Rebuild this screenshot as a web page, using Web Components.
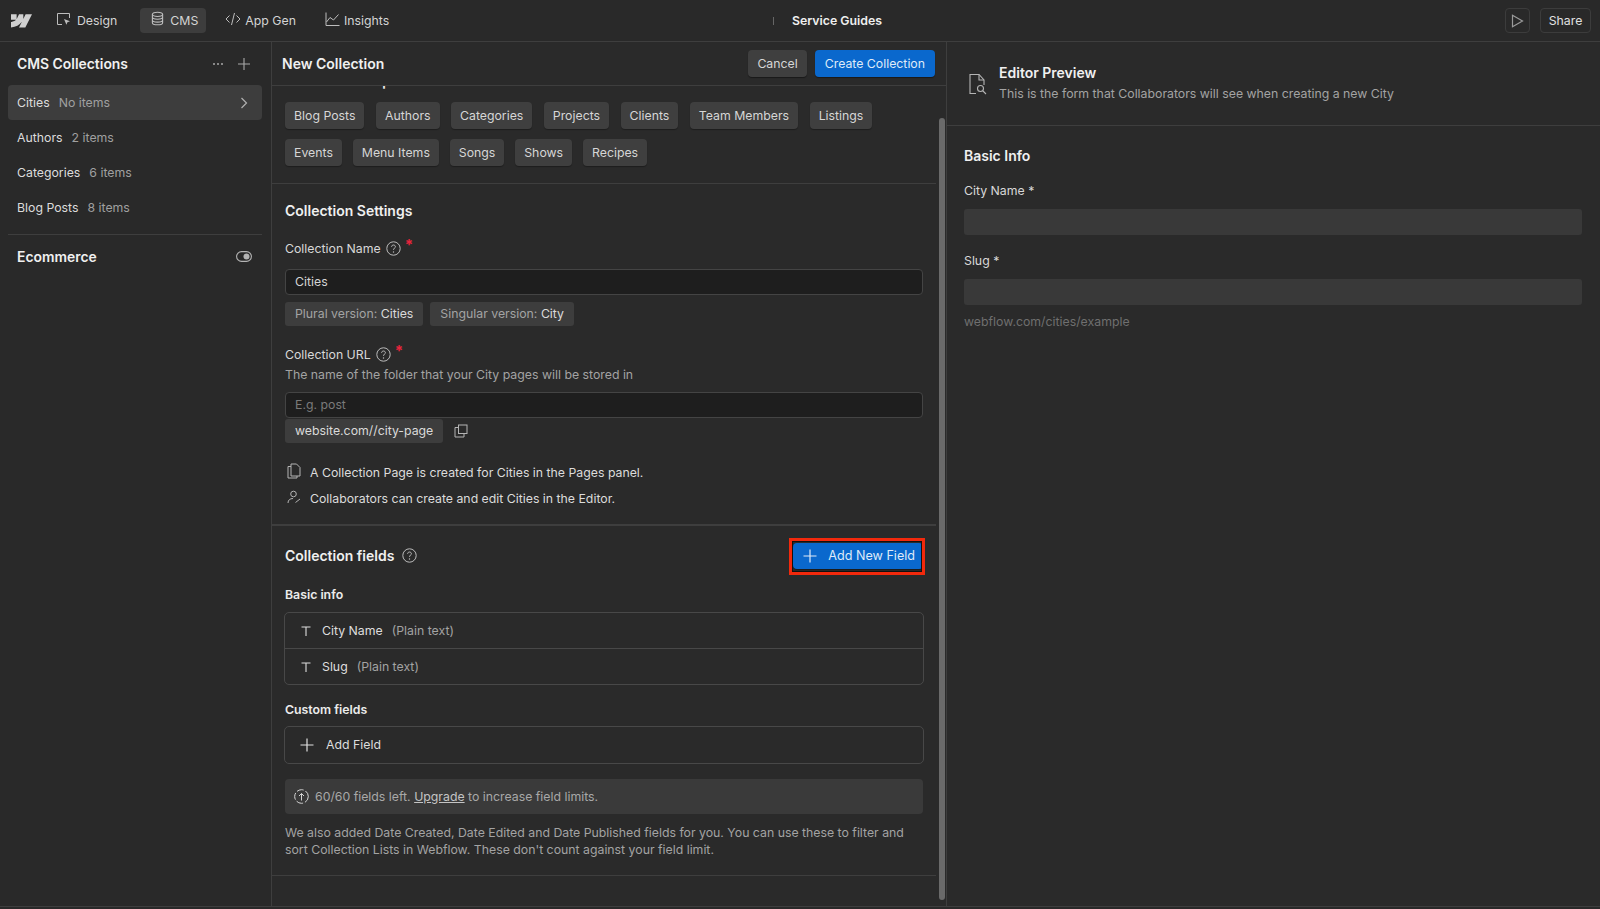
<!DOCTYPE html>
<html lang="en"><head><meta charset="utf-8"><title>Service Guides</title>
<style>
html,body{margin:0;padding:0;height:100%;background:#292929;overflow:hidden}
body{font:12.3px/16px Inter,"Liberation Sans",sans-serif;color:#d9d9d9}
</style></head><body>
<wf-app>
  <wf-topbar slot="top"></wf-topbar>
  <wf-sidebar slot="side"></wf-sidebar>
  <wf-form slot="main"></wf-form>
  <wf-preview slot="right"></wf-preview>
</wf-app>
<script>
const ic={
 design:'<svg width="16" height="16" viewBox="0 0 16 16" fill="none" stroke="currentColor"><path d="M6 13.500H1.500v-11h12V7"/><path d="M8 8l6 2.200-2.600 1-1 2.600z" fill="currentColor" stroke="none"/></svg>',
 db:'<svg width="13" height="15" viewBox="0 0 14 16" fill="none" stroke="currentColor" stroke-width="1.200"><ellipse cx="7" cy="3.500" rx="5.500" ry="2.300"/><path d="M1.500 3.500v9c0 1.300 2.500 2.300 5.500 2.300s5.500-1 5.500-2.300v-9M1.500 6.500c0 1.300 2.500 2.300 5.500 2.300s5.500-1 5.500-2.300M1.500 9.600c0 1.300 2.500 2.300 5.500 2.300s5.500-1 5.500-2.300"/></svg>',
 code:'<svg width="16" height="16" viewBox="0 0 16 16" fill="none" stroke="currentColor"><path d="M4.500 4.500L1 8l3.500 3.500M11.500 4.500L15 8l-3.500 3.500M9.500 2L6.500 14"/></svg>',
 chart:'<svg width="15" height="16" viewBox="0 0 15 16" fill="none" stroke="currentColor"><path d="M1 1.500v13h13.500"/><path d="M1.500 11l3.500-4.500 3.500 2.500 5-5.500"/></svg>',
 help:'<svg width="15" height="15" viewBox="0 0 15 15" fill="none" stroke="currentColor"><circle cx="7.500" cy="7.500" r="6.700"/><path d="M5.600 5.800c0-1.100.9-1.800 1.900-1.800s1.900.7 1.900 1.700c0 1.500-1.900 1.500-1.900 3.100"/><circle cx="7.500" cy="11" r=".7" fill="currentColor" stroke="none"/></svg>',
 plus:'<svg width="14" height="14" viewBox="0 0 14 14" fill="none" stroke="currentColor" stroke-width="1.200"><path d="M7 .5v13M.5 7h13"/></svg>',
 t:'<svg width="12" height="12" viewBox="0 0 12 12" fill="none" stroke="currentColor" stroke-width="1.100"><path d="M1.500 2h9M6 2v9"/></svg>'
};
function def(name,css,html){
  class C extends HTMLElement{
    constructor(){super();const r=this.attachShadow({mode:'open'});r.innerHTML='<style>'+css+'</style>'+(typeof html==='function'?html(this):html);}
  }
  customElements.define(name,C);
}
const A=(e,n)=>e.getAttribute(n)||'';

def('wf-app',`:host{display:grid;grid-template-columns:271px 1px 674px 1px 1fr;grid-template-rows:41px 1px 1fr 1px 2px;height:909px;background:#292929}
 .top{grid-column:1/-1}.rule{background:#3e3e3e}.h{grid-column:1/-1;background:#3e3e3e}
 .c{min-width:0;min-height:0;overflow:hidden}`,
 `<div class="top"><slot name="top"></slot></div><div class="h"></div>
  <div class="c"><slot name="side"></slot></div><div class="rule"></div>
  <div class="c"><slot name="main"></slot></div><div class="rule"></div>
  <div class="c"><slot name="right"></slot></div>
  <div class="h"></div>`);

def('wf-tab',`:host{display:flex;align-items:center;gap:var(--g,5px);height:25px;padding:0 8px;border-radius:4px;color:#d4d4d4;font-size:12.300px}
 :host([active]){background:#3d3d3d}
 .i{display:flex;color:#bdbdbd}`,`<span class="i"><slot name="i"></slot></span><slot></slot>`);

def('wf-topbar',`:host{display:flex;align-items:center;height:41px;padding:0 9px 0 11px;box-sizing:border-box;background:#292929}
 .logo{display:flex;width:22px;margin-right:16px;color:#d0d0d0}
 .tabs{display:flex;align-items:center;gap:7px}
 .mid{position:absolute;left:773px;display:flex;align-items:center;gap:18px;font-weight:600;color:#efefef}
 .sep{width:1px;height:8px;background:#666}
 .right{margin-left:auto;display:flex;gap:10px}
 .b{display:flex;align-items:center;justify-content:center;height:25px;box-sizing:border-box;border:1px solid #3c3c3c;border-radius:4px;color:#e0e0e0}
 .play{width:25px;color:#9a9a9a}.share{width:51px}`,
 `<span class="logo"><svg width="21" height="14" viewBox="0 0 22 14" fill="currentColor"><path d="M22 0L15 13.700H8.400L11.300 8H11.200C8.800 11.200 5.200 13.300 0 13.700V8.100C0 8.100 3.300 7.900 5.200 5.800H0V0H5.900V4.800H6L8.400 0H12.900V4.800L15.300 0Z"/></svg></span>
  <div class="tabs">
   <wf-tab style="padding:0 8px 0 7px"><span slot="i">${ic.design}</span>Design</wf-tab>
   <wf-tab active style="margin-left:8px;padding:0 8px 0 11px;--g:6px"><span slot="i">${ic.db}</span>CMS</wf-tab>
   <wf-tab style="margin-left:4px;--g:4px"><span slot="i">${ic.code}</span>App Gen</wf-tab>
   <wf-tab style="margin-left:6px;--g:4px"><span slot="i">${ic.chart}</span>Insights</wf-tab>
  </div>
  <div class="mid"><span class="sep"></span><span>Service Guides</span></div>
  <div class="right">
   <span class="b play"><svg width="13" height="14" viewBox="0 0 13 14" fill="none" stroke="currentColor" stroke-width="1.200"><path d="M1.500 1.200v11.600L11.500 7z"/></svg></span>
   <span class="b share">Share</span>
  </div>`);

def('wf-col-item',`:host{display:flex;align-items:center;height:35px;padding:0 14px 0 9px;margin:0 9px 0 8px;border-radius:4px;color:#dcdcdc;gap:9px}
 :host([active]){background:#3d3d3d}
 .n{color:#a0a0a0}.s{margin-left:auto;display:flex;color:#b0b0b0}`,
 e=>`<span><slot></slot></span><span class="n">${A(e,'count')}</span>${e.hasAttribute('active')?'<span class="s"><svg width="8" height="12" viewBox="0 0 8 12" fill="none" stroke="currentColor" stroke-width="1.200"><path d="M1.500 1l5 5-5 5"/></svg></span>':''}`);

def('wf-sidebar',`:host{display:block;height:100%}
 .head{display:flex;align-items:center;height:43px;padding:0 21px 0 17px;font-size:13.900px;font-weight:600;color:#f0f0f0}
 .tools{margin-left:auto;display:flex;align-items:center;gap:14px;color:#a9a9a9}
 .list{display:flex;flex-direction:column}
 hr{border:0;height:1px;background:#3e3e3e;margin:9px 9px 0 8px}
 .eco{display:flex;align-items:center;justify-content:space-between;height:43px;padding:0 19px 0 17px;font-size:13.900px;font-weight:600;color:#f0f0f0}
 .eco span{display:flex;color:#b4b4b4}`,
 `<div class="head">CMS Collections<span class="tools">
   <svg width="12" height="4" viewBox="0 0 12 4" fill="currentColor"><circle cx="2" cy="2" r="1"/><circle cx="6" cy="2" r="1"/><circle cx="10" cy="2" r="1"/></svg>
   <svg width="12" height="12" viewBox="0 0 12 12" fill="none" stroke="currentColor" stroke-width="1.100"><path d="M6 0v12M0 6h12"/></svg></span></div>
  <div class="list">
   <wf-col-item active count="No items">Cities</wf-col-item>
   <wf-col-item count="2 items">Authors</wf-col-item>
   <wf-col-item count="6 items">Categories</wf-col-item>
   <wf-col-item count="8 items">Blog Posts</wf-col-item>
  </div><hr>
  <div class="eco">Ecommerce<span><svg width="16" height="11" viewBox="0 0 16 11" fill="none"><rect x=".6" y=".6" width="14.800" height="9.800" rx="4.900" stroke="currentColor" stroke-width="1.100"/><circle cx="10.500" cy="5.500" r="3" fill="currentColor"/></svg></span></div>`);

def('wf-chip',`:host{display:inline-flex;align-items:center;height:27px;padding:0 9px;box-sizing:border-box;background:#3f3f3f;border-radius:4px;color:#d6d6d6;box-shadow:0 1px 1px rgba(0,0,0,.3)}`,`<slot></slot>`);
def('wf-btn',`:host{display:inline-flex;align-items:center;height:27px;padding:0 9px;box-sizing:border-box;background:#3f3f3f;border-radius:4px;color:#d6d6d6;gap:11px;box-shadow:0 1px 1px rgba(0,0,0,.4)}
 :host([primary]){background:#0a68cd;color:#dfeaf8}`,`<slot></slot>`);
def('wf-pill',`:host{display:inline-flex;align-items:center;height:24px;padding:0 10px;box-sizing:border-box;background:#3d3d3d;border-radius:3px;color:#a3a3a3;gap:3.500px}
 ::slotted(b){font-weight:400;color:#dadada}`,`<slot></slot>`);
def('wf-input',`:host{display:flex;align-items:center;height:26px;box-sizing:border-box;padding:0 9px;background:#1e1e1e;border:1px solid #444;border-radius:4px;color:#d4d4d4}
 :host([empty]){color:#7a7a7a}`,`<slot></slot>`);
def('wf-label',`:host{display:flex;align-items:flex-start;color:#d8d8d8;gap:5px;height:16px}
 .h{display:flex;color:#bcbcbc;margin-top:0}.r{color:#e8243c;font-weight:700;line-height:12px;margin:-2px 0 0 -1px;font-size:15px}`,
 `<slot></slot><span class="h">${ic.help}</span><span class="r">*</span>`);
def('wf-note',`:host{display:flex;align-items:center;gap:9px;height:26px;color:#dcdcdc;padding-left:2px}
 .i{display:flex;width:14px;color:#b4b4b4}`,`<span class="i"><slot name="i"></slot></span><span><slot></slot></span>`);
def('wf-field',`:host{display:flex;align-items:center;height:35px;padding:0 15px;gap:9px;color:#dedede}
 .i{display:flex;color:#dedede;margin-right:1px}.k{color:#a3a3a3}`,
 e=>`<span class="i">${ic.t}</span><span><slot></slot></span><span class="k">(${A(e,'kind')})</span>`);

def('wf-form',`:host{display:flex;flex-direction:column;height:100%;position:relative;background:#2a2a2a}
 .head{flex:none;display:flex;align-items:center;height:44px;box-sizing:border-box;padding:0 11px 0 10px;border-bottom:1px solid #3e3e3e;font-size:14px;font-weight:600;color:#f0f0f0;gap:8px}
 .head .t{margin-right:auto}
 .head wf-btn{font-weight:400;font-size:12.300px}
 .head wf-btn[primary]{padding:0 10px}
 .scroll{flex:1;min-height:0;overflow:hidden;position:relative}
 .clip{margin-top:-13px}
 .templ{padding:0 13px}
 .templ h4{margin:0 0 13px;font-size:13.500px;line-height:16px;font-weight:600;color:#eee}
 .chips{display:flex;gap:11.500px}
 .chips.two{gap:10.900px;margin-top:10px;padding-bottom:17px}
 .sec{border-top:1px solid #3e3e3e;margin-right:10px;padding:0 13px}
 h3{margin:0;font-size:14px;line-height:18px;font-weight:600;color:#f0f0f0}
 .sub{color:#a3a3a3;margin-top:4px}
 .row{display:flex;gap:7px}
 .cf{display:flex;align-items:center;gap:8px;position:relative;padding-top:16px;height:27px}
 .cf .h{display:flex;color:#bcbcbc}
 .cf .add{position:absolute;right:0;top:17px}
 .ring{position:absolute;inset:-5px -2px -6px -4px;border:3px solid #f2290c;box-shadow:inset 0 0 0 1px #111;pointer-events:none}
 h5{margin:0;font-size:12.300px;line-height:16px;font-weight:600;color:#ececec}
 .box{border:1px solid #484848;border-radius:5px;margin:9px -1px 0}
 .box wf-field+wf-field{border-top:1px solid #484848}
 .notice{display:flex;align-items:center;gap:6px;height:35px;padding:0 9px;background:#3a3a3a;border-radius:4px;color:#a8a8a8;margin-top:15px}
 .notice u{color:#c4c4c4}
 .notice svg{flex:none}
 .foot{color:#a3a3a3;line-height:17px;margin-top:10px;padding-bottom:17px}
 .sb{position:absolute;right:1px;top:76px;bottom:6px;width:6px;border-radius:3px;background:#6a6a6a}`,
 `<div class="head"><span class="t">New Collection</span><wf-btn>Cancel</wf-btn><wf-btn primary>Create Collection</wf-btn></div>
 <div class="scroll"><div class="clip">
  <div class="templ"><h4>Collection Templates</h4>
   <div class="chips">
    <wf-chip>Blog Posts</wf-chip><wf-chip>Authors</wf-chip><wf-chip>Categories</wf-chip><wf-chip>Projects</wf-chip><wf-chip>Clients</wf-chip><wf-chip>Team Members</wf-chip><wf-chip>Listings</wf-chip>
   </div>
   <div class="chips two">
    <wf-chip>Events</wf-chip><wf-chip>Menu Items</wf-chip><wf-chip>Songs</wf-chip><wf-chip>Shows</wf-chip><wf-chip>Recipes</wf-chip>
   </div></div>
  <div class="sec">
   <h3 style="padding-top:18px">Collection Settings</h3>
   <wf-label style="margin-top:21px">Collection Name</wf-label>
   <wf-input style="margin-top:12px">Cities</wf-input>
   <div class="row" style="margin-top:7px"><wf-pill>Plural version: <b>Cities</b></wf-pill><wf-pill>Singular version: <b>City</b></wf-pill></div>
   <wf-label style="margin-top:21px">Collection URL</wf-label>
   <div class="sub">The name of the folder that your City pages will be stored in</div>
   <wf-input empty style="margin-top:9px">E.g. post</wf-input>
   <div class="row" style="margin-top:1px;align-items:center;gap:11px"><wf-pill style="color:#dadada">website.com//city-page</wf-pill>
    <svg width="14" height="14" viewBox="0 0 14 14" fill="none" stroke="#b4b4b4"><rect x="4.500" y="1" width="8.500" height="8.500"/><path d="M4 3.500H1V13h9V10"/></svg></div>
   <div style="margin-top:17px;padding-bottom:12px">
    <wf-note><span slot="i"><svg width="14" height="16" viewBox="0 0 14 16" fill="none" stroke="currentColor"><path d="M4 1h5.500L13 4.500V13H4z"/><path d="M4 3.500H1V15h9v-2"/></svg></span>A Collection Page is created for Cities in the Pages panel.</wf-note>
    <wf-note><span slot="i"><svg width="14" height="14" viewBox="0 0 14 14" fill="none" stroke="currentColor"><circle cx="6.500" cy="4" r="2.800"/><path d="M1 13c0-3 2-4.500 5-4.500M8.500 12.500l4.500-3.500"/></svg></span>Collaborators can create and edit Cities in the Editor.</wf-note>
   </div>
  </div>
  <div class="sec" style="border-top-width:2px">
   <div class="cf"><h3>Collection fields</h3><span class="h">${ic.help}</span>
    <wf-btn primary class="add" style="height:26px;padding:0 8px 0 10px;font-size:12.600px"><span style="display:flex">${ic.plus}</span>Add New Field<span class="ring"></span></wf-btn></div>
   <h5 style="margin-top:18px">Basic info</h5>
   <div class="box"><wf-field kind="Plain text">City Name</wf-field><wf-field kind="Plain text">Slug</wf-field></div>
   <h5 style="margin-top:17px">Custom fields</h5>
   <div class="box" style="display:flex;align-items:center;height:36px;padding:0 15px;gap:12px;color:#dedede;margin-top:8px"><span style="display:flex;color:#e0e0e0">${ic.plus}</span>Add Field</div>
   <div class="notice"><svg width="15" height="15" viewBox="0 0 15 15" fill="none" stroke="#d6d6d6"><circle cx="7.500" cy="7.500" r="6.800" stroke-dasharray="7 2"/><path d="M7.500 11.500v-7M5 7l2.500-2.500L10 7"/></svg><span>60/60 fields left. <u>Upgrade</u> to increase field limits.</span></div>
   <div class="foot">We also added Date Created, Date Edited and Date Published fields for you. You can use these to filter and sort Collection Lists in Webflow. These don't count against your field limit.</div>
  </div>
  <div class="sec"></div>
 </div></div>
 <div class="sb"></div>`);

def('wf-preview',`:host{display:block;height:100%;background:#2a2a2a}
 .head{display:flex;align-items:center;gap:11px;height:84px;box-sizing:border-box;padding:0 21px 2px;border-bottom:1px solid #3e3e3e}
 .head .i{display:flex;color:#b4b4b4}
 .t{font-size:14px;line-height:18px;font-weight:600;color:#f0f0f0}
 .s{color:#a3a3a3;margin-top:4px}
 .body{padding:21px 18px 0 17px}
 h3{margin:0;font-size:14px;line-height:18px;font-weight:600;color:#f0f0f0}
 label{display:block;color:#d8d8d8}
 .f{height:26px;border-radius:3px;background:#393939}
 .hint{color:#6f6f6f;margin-top:9px}`,
 `<div class="head"><span class="i" style="margin-top:2px"><svg width="20" height="22" viewBox="0 0 20 22" fill="none" stroke="currentColor" stroke-width="1.100"><path d="M8 20.500H2V1.500h9l5 5.500v5"/><path d="M11 1.500V7h5"/><circle cx="12.500" cy="15.500" r="3"/><path d="M15 18l3 3"/></svg></span>
   <div><div class="t">Editor Preview</div><div class="s">This is the form that Collaborators will see when creating a new City</div></div></div>
  <div class="body"><h3>Basic Info</h3>
   <label style="margin-top:18px">City Name *</label><div class="f" style="margin-top:10px"></div>
   <label style="margin-top:18px">Slug *</label><div class="f" style="margin-top:10px"></div>
   <div class="hint">webflow.com/cities/example</div></div>`);
</script>
</body></html>
